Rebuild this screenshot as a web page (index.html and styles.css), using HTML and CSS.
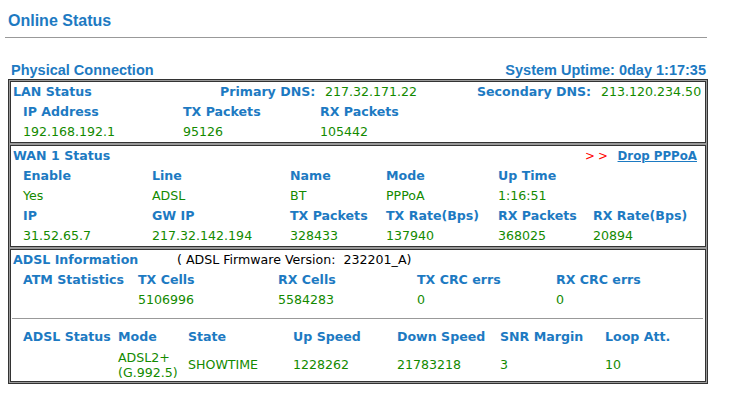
FILE: index.html
```html
<!DOCTYPE html>
<html lang="en">
<head>
    <meta charset="UTF-8">
    <title>Online Status</title>
    <link rel="stylesheet" href="styles.css">
</head>
<body>
    <h2 class="page-title">Online Status</h2>
    <hr class="title-line">

    <div class="caption">
        <span>Physical Connection</span>
        <span>System Uptime: 0day 1:17:35</span>
    </div>

    <div class="status-box">
        <!-- LAN -->
        <div class="section">
            <div class="row lan-top">
                <span class="title">LAN Status</span>
                <span class="lbl">Primary DNS:</span>
                <span class="val">217.32.171.22</span>
                <span class="lbl">Secondary DNS:</span>
                <span class="val">213.120.234.50</span>
            </div>
            <div class="row lan-cols">
                <span class="lbl">IP Address</span>
                <span class="lbl">TX Packets</span>
                <span class="lbl">RX Packets</span>
            </div>
            <div class="row lan-cols">
                <span class="val">192.168.192.1</span>
                <span class="val">95126</span>
                <span class="val">105442</span>
            </div>
        </div>

        <!-- WAN -->
        <div class="section">
            <div class="row wan-top">
                <span class="title">WAN 1 Status</span>
                <span class="drop"><span class="arrows">&gt;&gt;</span> <a href="#">Drop PPPoA</a></span>
            </div>
            <div class="row wan-cols">
                <span class="lbl">Enable</span>
                <span class="lbl">Line</span>
                <span class="lbl">Name</span>
                <span class="lbl">Mode</span>
                <span class="lbl">Up Time</span>
                <span></span>
            </div>
            <div class="row wan-cols">
                <span class="val">Yes</span>
                <span class="val">ADSL</span>
                <span class="val">BT</span>
                <span class="val">PPPoA</span>
                <span class="val">1:16:51</span>
                <span></span>
            </div>
            <div class="row wan-cols">
                <span class="lbl">IP</span>
                <span class="lbl">GW IP</span>
                <span class="lbl">TX Packets</span>
                <span class="lbl">TX Rate(Bps)</span>
                <span class="lbl">RX Packets</span>
                <span class="lbl">RX Rate(Bps)</span>
            </div>
            <div class="row wan-cols">
                <span class="val">31.52.65.7</span>
                <span class="val">217.32.142.194</span>
                <span class="val">328433</span>
                <span class="val">137940</span>
                <span class="val">368025</span>
                <span class="val">20894</span>
            </div>
        </div>

        <!-- ADSL -->
        <div class="section">
            <div class="row adsl-top">
                <span class="title">ADSL Information</span>
                <span class="fw">( ADSL Firmware Version:&nbsp; 232201_A)</span>
            </div>
            <div class="row atm-cols">
                <span class="lbl">ATM Statistics</span>
                <span class="lbl">TX Cells</span>
                <span class="lbl">RX Cells</span>
                <span class="lbl">TX CRC errs</span>
                <span class="lbl">RX CRC errs</span>
            </div>
            <div class="row atm-cols">
                <span></span>
                <span class="val">5106996</span>
                <span class="val">5584283</span>
                <span class="val">0</span>
                <span class="val">0</span>
            </div>
            <hr class="split">
            <div class="row line-cols">
                <span class="lbl">ADSL Status</span>
                <span class="lbl">Mode</span>
                <span class="lbl">State</span>
                <span class="lbl">Up Speed</span>
                <span class="lbl">Down Speed</span>
                <span class="lbl">SNR Margin</span>
                <span class="lbl">Loop Att.</span>
            </div>
            <div class="row line-cols line-vals">
                <span></span>
                <span class="val two">ADSL2+<br>(G.992.5)</span>
                <span class="val">SHOWTIME</span>
                <span class="val">1228262</span>
                <span class="val">21783218</span>
                <span class="val">3</span>
                <span class="val">10</span>
            </div>
        </div>
    </div>
</body>
</html>
```

FILE: styles.css
```css
body {
    margin: 0;
    padding: 0 8px;
    background: #fff;
    font-family: "DejaVu Sans", Verdana, sans-serif;
    font-size: 12.6px;
    width: 700px;
}
.page-title {
    font-family: "Liberation Sans", Arial, sans-serif;
    font-size: 16px;
    color: #1d7ac2;
    margin: 0;
    padding-top: 12px;
    line-height: 18px;
}
.title-line {
    border: none;
    border-top: 1px solid #999;
    margin: 7px 0 0 -3px;
    width: 702px;
}
.caption {
    display: flex;
    justify-content: space-between;
    font-family: "Liberation Sans", Arial, sans-serif;
    font-weight: bold;
    font-size: 14.5px;
    color: #1d7ac2;
    margin-top: 23px;
    padding: 0 2px 0 3px;
    line-height: 18px;
}
.status-box {
    margin-top: 0;
    border: 1px solid #333;
    background: #9a9a9a;
    padding: 1px;
    display: flex;
    flex-direction: column;
    gap: 2px;
}
.section {
    background: #fff;
    border: 1px solid #333;
    padding: 0 2px;
}
.row {
    display: grid;
    line-height: 20px;
    white-space: nowrap;
}
.title, .lbl {
    font-weight: bold;
    color: #1d7ac2;
}
.val {
    color: #138a00;
}
.lan-top {
    grid-template-columns: 207px 105px 152px 124px 1fr;
}
.lan-cols {
    padding-left: 10px;
    grid-template-columns: 160px 137px 1fr;
}
.wan-top {
    display: flex;
    justify-content: space-between;
    padding-right: 6px;
}
.drop {
    font-size: 11.8px;
}
.drop a {
    color: #1d7ac2;
    font-weight: bold;
}
.arrows {
    color: #f00;
    letter-spacing: 3px;
    margin-right: 3px;
}
.wan-cols {
    padding-left: 10px;
    grid-template-columns: 129px 138px 96px 112px 95px 1fr;
}
.adsl-top {
    grid-template-columns: 164px 1fr;
}
.fw {
    color: #000;
}
.atm-cols {
    padding-left: 10px;
    grid-template-columns: 115px 140px 139px 139px 1fr;
}
.split {
    border: none;
    border-top: 1px solid #999;
    margin: 8px 0 8px -1px;
}
.line-cols {
    padding-left: 10px;
    grid-template-columns: 95px 70px 105px 104px 103px 105px 1fr;
}
.line-vals {
    align-items: center;
    padding-top: 3px;
    padding-bottom: 1px;
}
.two {
    line-height: 15px;
}
```
